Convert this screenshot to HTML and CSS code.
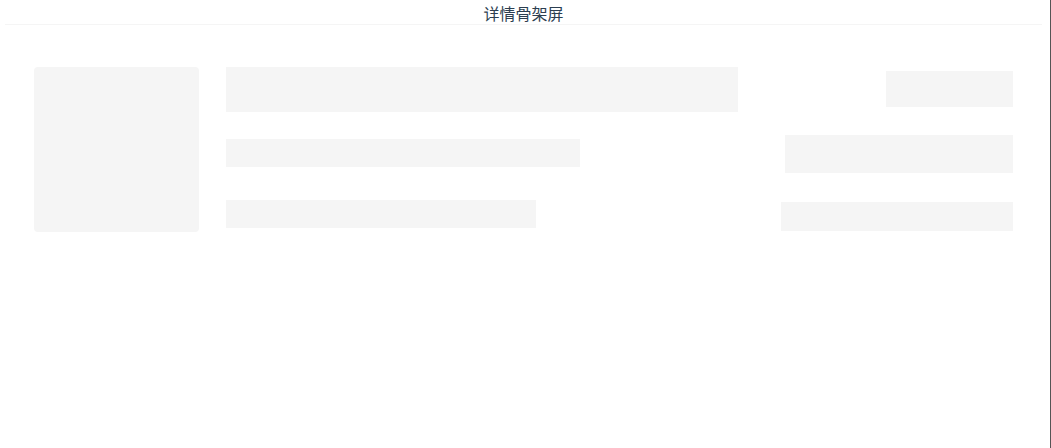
FILE: index.html
```html
<!DOCTYPE html>
<html lang="zh">
<head>
<meta charset="utf-8">
<title>详情骨架屏</title>
<link rel="stylesheet" href="styles.css">
</head>
<body>
<div class="app">
  <header class="header">详情骨架屏</header>
  <main class="detail">
    <div class="thumb"></div>
    <div class="info">
      <div class="bar bar-title"></div>
      <div class="bar bar-line2"></div>
      <div class="bar bar-line3"></div>
    </div>
    <div class="side">
      <div class="bar side-1"></div>
      <div class="bar side-2"></div>
      <div class="bar side-3"></div>
    </div>
  </main>
</div>
</body>
</html>
```
FILE: styles.css
```css
html, body {
  margin: 0;
  padding: 0;
  background: #fff;
}
.app {
  box-sizing: border-box;
  width: 1051px;
  height: 448px;
  border-right: 1px solid #555;
  font-family: "Noto Sans CJK SC", "Noto Sans", sans-serif;
  color: #2c3e50;
}
.header {
  margin: 0 8px 0 5px;
  height: 24px;
  line-height: 26px;
  font-size: 16px;
  text-align: center;
  border-bottom: 1px solid #f5f5f5;
}
.detail {
  display: flex;
  align-items: flex-start;
  padding: 42px 37px 0 34px;
}
.bar {
  background: #f5f5f5;
}
.thumb {
  width: 165px;
  height: 165px;
  background: #f5f5f5;
  border-radius: 4px;
  flex: none;
}
.info {
  display: flex;
  flex-direction: column;
  width: 512px;
  margin-left: 27px;
  flex: none;
}
.bar-title { width: 512px; height: 45px; }
.bar-line2 { width: 354px; height: 28px; margin-top: 27px; }
.bar-line3 { width: 310px; height: 28px; margin-top: 33px; }
.side {
  flex: 1;
  display: flex;
  flex-direction: column;
  align-items: flex-end;
}
.side-1 { width: 127px; height: 36px; margin-top: 4px; }
.side-2 { width: 228px; height: 38px; margin-top: 28px; }
.side-3 { width: 232px; height: 29px; margin-top: 29px; }
```
